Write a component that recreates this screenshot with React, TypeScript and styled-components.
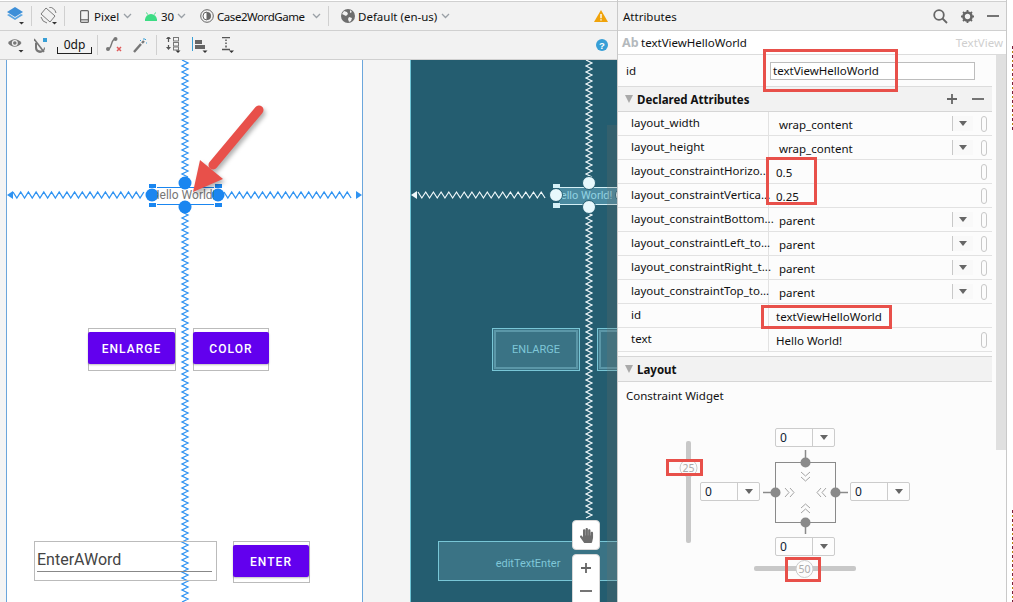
import styled, { createGlobalStyle } from "styled-components";
import { FaHandPaper } from "react-icons/fa";

const GlobalStyle = createGlobalStyle`
  html, body { margin: 0; padding: 0; background: #fff; overflow: hidden; }
  * { box-sizing: border-box; }
`;

const Page = styled.div`
  position: relative;
  display: flex;
  width: 1013px;
  height: 602px;
  overflow: hidden;
  font-family: "Noto Sans", "Open Sans", sans-serif;
  font-size: 11.5px;
  color: #111;
  background: #fff;
`;

const DesignPane = styled.div`
  display: flex;
  flex-direction: column;
  width: 618px;
  height: 100%;
  border-right: 1px solid #c9c9c9;
`;

const Toolbar = styled.div<{ $first?: boolean }>`
  display: flex;
  align-items: center;
  flex: none;
  height: ${(p) => (p.$first ? "30px" : "29px")};
  margin-top: ${(p) => (p.$first ? "1px" : "0")};
  border-top: ${(p) => (p.$first ? "1px solid #d0d0d0" : "none")};
  border-bottom: 1px solid #d0d0d0;
  background: #f2f2f2;
  padding-right: 9px;
`;

const Slot = styled.div<{ $w: number; $ml?: number }>`
  display: flex;
  align-items: center;
  justify-content: center;
  flex: none;
  width: ${(p) => p.$w}px;
  margin-left: ${(p) => p.$ml ?? 0}px;
  white-space: nowrap;
`;

const Label = styled(Slot)<{ $ls?: number }>`
  justify-content: flex-start;
  letter-spacing: ${(p) => p.$ls ?? 0}px;
`;

const Sep = styled.div<{ $ml: number }>`
  flex: none;
  width: 1px;
  height: 20px;
  margin-left: ${(p) => p.$ml}px;
  background: #d0d0d0;
`;

const Push = styled.div`
  flex: 1;
`;

const Dp = styled.div<{ $ml: number }>`
  flex: none;
  width: 35px;
  height: 17px;
  margin-left: ${(p) => p.$ml}px;
  border-bottom: 1px solid #222;
  border-left: 1px solid #222;
  border-right: 1px solid #222;
  border-image: linear-gradient(to bottom, transparent 60%, #222 60%) 1;
  text-align: center;
  font-size: 12px;
  line-height: 15px;
`;

const Canvas = styled.div`
  display: flex;
  flex: 1;
  min-height: 0;
  padding-left: 6px;
  gap: 47px;
  background: #f4f4f4;
`;

const Surface = styled.div`
  position: relative;
  flex: none;
  width: 357px;
  height: 100%;
  background: #fff;
  box-shadow: inset 1px 0 0 #6ba6dc, inset -1px 0 0 #6ba6dc;
`;

const Blueprint = styled.div`
  position: relative;
  flex: 1;
  height: 100%;
  overflow: hidden;
  background: #245d70;
  box-shadow: inset 1px 0 0 #6fc5d5;
`;

const Strip = styled.div`
  position: absolute;
  left: 197px;
  top: 65px;
  bottom: 0;
  width: 10px;
  background: rgba(120, 110, 100, 0.2);
`;

const Guides = styled.svg`
  position: absolute;
  left: 0;
  top: 0;
  width: 100%;
  height: 100%;
  pointer-events: none;
`;

const Placed = styled.div<{ $x: number; $y: number; $w: number; $h: number }>`
  position: absolute;
  left: ${(p) => p.$x}px;
  top: ${(p) => p.$y}px;
  width: ${(p) => p.$w}px;
  height: ${(p) => p.$h}px;
`;

const ButtonFrame = styled(Placed)`
  border: 1px solid #bbb;
  padding-top: 3px;
`;

const PurpleButton = styled.div<{ $w: number }>`
  display: flex;
  align-items: center;
  justify-content: center;
  width: ${(p) => p.$w}px;
  height: 32px;
  margin-left: -1px;
  padding-top: 1px;
  border-radius: 2px;
  background: #6200ee;
  box-shadow: 0 1px 2px rgba(0, 0, 0, 0.25);
  color: #fff;
  font-family: Roboto, sans-serif;
  font-weight: 500;
  font-size: 12px;
  letter-spacing: 1.05px;
`;

const WordField = styled(Placed)`
  border: 1px solid #bbb;
  padding: 6px 4px 0 2px;
  font-family: Roboto, sans-serif;
  font-size: 16px;
  line-height: 23px;
  color: #444;
`;

const WordLine = styled.div`
  height: 1px;
  background: #888;
`;

const HelloBox = styled(Placed)<{ $dark?: boolean }>`
  overflow: hidden;
  border-top: 1px solid ${(p) => (p.$dark ? "#d5f0f6" : "#1a86f0")};
  border-bottom: 1px solid ${(p) => (p.$dark ? "#d5f0f6" : "#1a86f0")};
  background: ${(p) => (p.$dark ? "#4a8aa0" : "transparent")};
  color: ${(p) => (p.$dark ? "#93d3e2" : "#777")};
  font-family: Roboto, sans-serif;
  font-size: ${(p) => (p.$dark ? "11px" : "12px")};
  line-height: 15px;
  white-space: nowrap;
  text-indent: -6px;
`;

const BlueWidget = styled(Placed)<{ $double?: boolean; $low?: boolean }>`
  display: flex;
  align-items: center;
  justify-content: center;
  padding-top: ${(p) => (p.$low ? "5px" : "0")};
  border: 1px solid #78c6d6;
  background: #3a7385;
  outline: ${(p) => (p.$double ? "2px solid #5b97a8" : "none")};
  outline-offset: -4px;
  color: #7fc7d8;
  font-family: Roboto, sans-serif;
  font-size: 11px;
  white-space: nowrap;
`;

const FloatButton = styled(Placed)`
  display: flex;
  align-items: center;
  justify-content: center;
  border-radius: 4px;
  border: 1px solid #d8d8d8;
  background: #fff;
  color: #6d6d6d;
`;

const ZoomButton = styled(FloatButton)`
  flex-direction: column;
  justify-content: flex-start;
  padding-top: 7px;
  gap: 11px;
`;

const AttributesPane = styled.div`
  display: flex;
  flex-direction: column;
  flex: none;
  width: 389px;
  height: 100%;
  border-right: 1px solid #c9c9c9;
  background: #fcfcfc;
`;

const AttrHeader = styled.div`
  display: flex;
  align-items: center;
  flex: none;
  height: 30px;
  margin-top: 1px;
  padding: 0 7px 0 5px;
  gap: 13px;
  border-top: 1px solid #d0d0d0;
  border-bottom: 1px solid #d0d0d0;
  background: #f2f2f2;
`;

const SubjectRow = styled.div`
  display: flex;
  align-items: center;
  flex: none;
  height: 24px;
  padding: 0 3px 0 4px;
  border-bottom: 1px solid #dcdcdc;
  background: #fff;
`;

const AbMark = styled.span`
  width: 19px;
  color: #b4b9bd;
  font-weight: 700;
  font-size: 12.5px;
`;

const WidgetType = styled.span`
  margin-left: auto;
  color: #cfcfcf;
`;

const AttrBody = styled.div`
  display: flex;
  flex: 1;
  min-height: 0;
`;

const AttrScroll = styled.div`
  flex: none;
  width: 378px;
`;

const ScrollTrack = styled.div`
  flex: none;
  width: 10px;
  height: 395px;
  background: #e0e0e0;
`;

const Table = styled.div`
  width: 374px;
`;

const IdRow = styled.div`
  display: flex;
  align-items: center;
  height: 32px;
  padding-left: 8px;
  border-bottom: 1px solid #dcdcdc;
`;

const IdName = styled.span`
  width: 144px;
`;

const IdInput = styled.div`
  width: 205px;
  height: 18px;
  padding-left: 2px;
  border: 1px solid #bdbdbd;
  background: #fff;
  line-height: 15px;
`;

const Section = styled.div`
  display: flex;
  align-items: center;
  height: 25px;
  padding-left: 7px;
  border-bottom: 1px solid #d6d6d6;
  background: #f2f2f2;
  font-weight: 700;
`;

const SectionTail = styled.div`
  display: flex;
  align-items: center;
  gap: 14px;
  margin-left: auto;
  margin-right: 8px;
`;

const Caret = styled.span`
  width: 0;
  height: 0;
  margin-right: 4px;
  border-left: 4.5px solid transparent;
  border-right: 4.5px solid transparent;
  border-top: 8px solid #a9a9a9;
`;

const Row = styled.div`
  display: flex;
  height: 24px;
  border-bottom: 1px solid #e2e2e2;
`;

const RowName = styled.div`
  flex: none;
  width: 151px;
  padding-left: 13px;
  border-right: 1px solid #e2e2e2;
  line-height: 21px;
  white-space: nowrap;
`;

const RowValue = styled.div<{ $pad: number }>`
  display: flex;
  align-items: center;
  flex: 1;
  padding-left: ${(p) => p.$pad}px;
`;

const DropControl = styled.div`
  display: flex;
  align-items: center;
  justify-content: center;
  flex: none;
  width: 21px;
  height: 15px;
  border-left: 1px solid #c8c8c8;
  background: #f9f9f9;
`;

const DownArrow = styled.span`
  width: 0;
  height: 0;
  border-left: 4.5px solid transparent;
  border-right: 4.5px solid transparent;
  border-top: 5px solid #666;
`;

const ValueText = styled.span`
  margin-right: auto;
  margin-top: 2px;
`;

const Pill = styled.span`
  flex: none;
  width: 6px;
  height: 16px;
  margin: 0 5px 0 8px;
  border: 1px solid #c8c8c8;
  border-radius: 3px;
`;

const GapLine = styled.div`
  height: 5px;
  border-bottom: 1px solid #d6d6d6;
`;

const WidgetTitle = styled.div`
  padding: 6px 0 0 8px;
  line-height: 16px;
`;

const Diagram = styled.div`
  position: relative;
  height: 180px;
  margin-top: 16px;
`;

const SmallDrop = styled(Placed)`
  display: flex;
  align-items: center;
  border: 1px solid #ccc;
  border-radius: 2px;
  background: #fdfdfd;
  padding-left: 4px;
  font-size: 12px;
`;

const SmallValue = styled.span`
  flex: 1;
  color: #123;
`;

const SmallArrow = styled.span`
  display: flex;
  align-items: center;
  justify-content: center;
  width: 22px;
  height: 100%;
  border-left: 1px solid #ccc;
`;

const EdgeColumn = styled.div`
  flex: 1;
  position: relative;
  background: #fff;
`;

const EdgeMarks = styled.div<{ $top: number; $h: number }>`
  position: absolute;
  right: 0;
  top: ${(p) => p.$top}px;
  width: 1px;
  height: ${(p) => p.$h}px;
  background: repeating-linear-gradient(to bottom, #7a1f3a 0 3px, transparent 3px 5px, #b8860b 5px 7px, transparent 7px 9px);
`;

const Annotation = styled(Placed)`
  border: 3px solid #e8504a;
`;

const ArrowMark = styled.svg`
  position: absolute;
  left: 170px;
  top: 90px;
  width: 110px;
  height: 120px;
  filter: drop-shadow(2px 3px 2px rgba(0, 0, 0, 0.3));
`;

const zigzag = (x: number, y: number, len: number, vertical: boolean, period: number, amp: number) => {
  const pts: string[] = [];
  const step = period / 2;
  for (let i = 0; i * step <= len; i++) {
    const along = i * step;
    const off = i % 2 === 0 ? -amp : amp;
    pts.push(vertical ? `${x + off},${y + along}` : `${x + along},${y + off}`);
  }
  return pts.join(" ");
};

const Chevron = () => (
  <svg width="9" height="6" viewBox="0 0 9 6">
    <path d="M1 1l3.5 3.5L8 1" fill="none" stroke="#9aa0a6" strokeWidth="1.3" />
  </svg>
);

const Mini = ({ x = 0, y = 0 }: { x?: number; y?: number }) => <path d={`M${x} ${y}h5l-2.5 2.5z`} fill="#333" />;

const LayersIcon = () => (
  <svg width="17" height="18" viewBox="0 0 17 18">
    <path d="M8 0l8 5-8 5-8-5z" fill="#3d8fd8" />
    <path d="M0 8l2-1 6 4 6-4 2 1-8 5z" fill="#5aa5e2" />
    <Mini x={12} y={15} />
  </svg>
);

const RotateIcon = () => (
  <svg width="17" height="18" viewBox="0 0 17 18" fill="none" stroke="#7a7a7a">
    <path d="M6 1l9 8-5 6-9-8z" fill="#f2f2f2" />
    <path d="M1 10a8 8 0 0 0 6 6M9 0a8 8 0 0 1 7 6" />
    <path d="M12 15h5l-2.500 2.500z" fill="#333" stroke="none" />
  </svg>
);

const PhoneIcon = () => (
  <svg width="9" height="13" viewBox="0 0 9 13" fill="none" stroke="#666" strokeWidth="1.2">
    <rect x=".6" y=".6" width="7.800" height="11.800" rx="1" />
    <path d="M.6 9.800h7.800" />
  </svg>
);

const AndroidIcon = () => (
  <svg width="12" height="9" viewBox="0 0 12 9">
    <path d="M0 8a6 6 0 0 1 12 0z" fill="#3ddc84" />
    <path d="M2.500 2.500L1.500 .5M9.500 2.500l1-2" stroke="#3ddc84" />
    <rect x="0" y="7" width="12" height="2" fill="#3ddc84" />
  </svg>
);

const ThemeIcon = () => (
  <svg width="14" height="14" viewBox="0 0 14 14">
    <circle cx="7" cy="7" r="6.300" fill="none" stroke="#666" />
    <path d="M7 3a4 4 0 0 0 0 8z" fill="#fff" stroke="#666" />
    <path d="M7 3a4 4 0 0 1 0 8z" fill="#666" />
  </svg>
);

const GlobeIcon = () => (
  <svg width="14" height="14" viewBox="0 0 14 14">
    <circle cx="7" cy="7" r="7" fill="#6e6e6e" />
    <path d="M3 2l3 1 1 2-2 2-2-1-2-1zM8 8l3 1-1 3-2 1-1-3zM9 1l2 2-2 1z" fill="#f2f2f2" />
  </svg>
);

const WarnIcon = () => (
  <svg width="14" height="12" viewBox="0 0 14 12">
    <path d="M7 0l7 12H0z" fill="#f0a30a" />
    <path d="M6.300 4h1.400v4.200H6.300zM6.300 9.200h1.400v1.400H6.300z" fill="#fff" />
  </svg>
);

const EyeIcon = () => (
  <svg width="16" height="17" viewBox="0 0 16 17">
    <path d="M0 6c3.500-5 10-5 13.500 0C10 11 3.500 11 0 6z" fill="#777" />
    <circle cx="6.800" cy="6" r="3" fill="#f2f2f2" />
    <circle cx="6.800" cy="6" r="1.800" fill="#777" />
    <path d="M10.500 13h5L13 15.500z" fill="#333" />
  </svg>
);

const MagnetIcon = () => (
  <svg width="14" height="15" viewBox="0 0 14 15">
    <path d="M1 2l2-1 0 5a3.500 3.500 0 0 0 7 0l1 1a5 5 0 0 1-10 0z" fill="#777" transform="translate(0 3)" />
    <path d="M0 1l10 13" stroke="#777" strokeWidth="1.600" />
    <rect x="9" y="0" width="4" height="4" fill="#389fd6" />
  </svg>
);

const CurveIcon = () => (
  <svg width="17" height="16" viewBox="0 0 17 16" fill="none">
    <path d="M2 12c4 0 3-10 7-10" stroke="#777" strokeWidth="1.400" />
    <circle cx="2" cy="12" r="2" fill="#777" />
    <circle cx="9.500" cy="2" r="2" fill="#777" />
    <path d="M11 10l4 4M15 10l-4 4" stroke="#e05a5a" strokeWidth="1.500" />
  </svg>
);

const WandIcon = () => (
  <svg width="14" height="15" viewBox="0 0 14 15" fill="none">
    <path d="M1 14l7-8" stroke="#777" strokeWidth="2.400" />
    <path d="M9 5l2-2" stroke="#777" strokeWidth="2.400" />
    <path d="M11 0v2M13 5h1M7 2l1 1M13 1l-1 1" stroke="#389fd6" />
  </svg>
);

const PackIcon = () => (
  <svg width="16" height="16" viewBox="0 0 16 16" fill="none">
    <path d="M3.500 0l2.500 3H1zM3.500 14l2.500-3H1z" fill="#555" transform="translate(0 -1)" />
    <path d="M3.500 2v3M3.500 8v3" stroke="#555" strokeWidth="1.200" />
    <rect x="8.500" y=".5" width="5" height="3.500" stroke="#777" />
    <rect x="8.500" y="5.500" width="5" height="3.500" stroke="#777" />
    <rect x="8.500" y="10" width="5" height="3" stroke="#777" />
    <path d="M10.500 13.500h5L13 16z" fill="#333" />
  </svg>
);

const AlignIcon = () => (
  <svg width="16" height="16" viewBox="0 0 16 16">
    <rect x="0" y="0" width="1" height="14" fill="#389fd6" />
    <rect x="3" y="3" width="7" height="4" fill="#666" />
    <rect x="3" y="8" width="10" height="4" fill="#666" />
    <path d="M10.500 13.500h5L13 16z" fill="#333" />
  </svg>
);

const MarginIcon = () => (
  <svg width="14" height="16" viewBox="0 0 14 16" fill="none">
    <path d="M2 .5h8M2 12.500h8" stroke="#555" strokeWidth="1.300" />
    <path d="M6 2.500v1.500M6 5.500v1.500M6 8.500v2" stroke="#555" strokeWidth="1.500" />
    <path d="M9 13.500h5L11.500 16z" fill="#333" />
  </svg>
);

const HelpIcon = () => (
  <svg width="12" height="12" viewBox="0 0 12 12">
    <circle cx="6" cy="6" r="6" fill="#389fd6" />
    <text x="6" y="9.500" textAnchor="middle" fontSize="9.500" fontWeight="700" fontFamily="Liberation Sans, sans-serif" fill="#fff">?</text>
  </svg>
);

const SearchIcon = () => (
  <svg width="15" height="15" viewBox="0 0 15 15" fill="none" stroke="#666" strokeWidth="1.800">
    <circle cx="6" cy="6" r="4.800" />
    <path d="M9.500 9.500l4.500 4.500" />
  </svg>
);

const GearIcon = () => (
  <svg width="13" height="13" viewBox="0 0 13 13">
    <circle cx="6.500" cy="6.500" r="4" fill="none" stroke="#666" strokeWidth="2.600" />
    <path d="M6.500 0v13M0 6.500h13M2 2l9 9M11 2l-9 9" stroke="#666" strokeWidth="1.800" strokeDasharray="2 9" />
  </svg>
);

const Dash = () => (
  <svg width="12" height="12" viewBox="0 0 12 12">
    <path d="M0 6h12" stroke="#666" strokeWidth="1.800" />
  </svg>
);

const Plus = () => (
  <svg width="12" height="12" viewBox="0 0 12 12">
    <path d="M1 6h10M6 1v10" stroke="#666" strokeWidth="1.800" />
  </svg>
);

type Attr = { name: string; value: string; pad: number; drop?: boolean; pill?: boolean };

const attrs: Attr[] = [
  { name: "layout_width", value: "wrap_content", pad: 10, drop: true, pill: true },
  { name: "layout_height", value: "wrap_content", pad: 10, drop: true, pill: true },
  { name: "layout_constraintHorizo...", value: "0.5", pad: 7, pill: true },
  { name: "layout_constraintVertica...", value: "0.25", pad: 7, pill: true },
  { name: "layout_constraintBottom...", value: "parent", pad: 10, drop: true, pill: true },
  { name: "layout_constraintLeft_to...", value: "parent", pad: 10, drop: true, pill: true },
  { name: "layout_constraintRight_t...", value: "parent", pad: 10, drop: true, pill: true },
  { name: "layout_constraintTop_to...", value: "parent", pad: 10, drop: true, pill: true },
  { name: "id", value: "textViewHelloWorld", pad: 7 },
  { name: "text", value: "Hello World!", pad: 7, pill: true },
];

const handles = [
  [143, 124], [143, 143], [209, 124], [209, 143],
];

const ConstraintWidget = () => (
  <Diagram>
    <Guides>
      <rect x="68" y="21" width="5" height="102" rx="2" fill="#c8c8c8" />
      <circle cx="70.500" cy="48" r="8.500" fill="#fcfcfc" stroke="#ccc" />
      <text x="70.500" y="52" textAnchor="middle" fontSize="10.500" fontFamily="Noto Sans, sans-serif" fill="#aaa">25</text>
      <rect x="136" y="146" width="102" height="5" rx="2" fill="#c8c8c8" />
      <circle cx="186.500" cy="149" r="8.500" fill="#fcfcfc" stroke="#ccc" />
      <text x="186.500" y="153" textAnchor="middle" fontSize="10.500" fontFamily="Noto Sans, sans-serif" fill="#aaa">50</text>
      <rect x="157.500" y="42.500" width="60" height="60" fill="none" stroke="#8a8a8a" />
      <g stroke="#8a8a8a" strokeWidth="1.500">
        <path d="M187.500 30v12M187.500 103v11M145 72.500h12M218 72.500h12" />
      </g>
      <g fill="#8a8a8a">
        <circle cx="187.500" cy="42.500" r="5" />
        <circle cx="187.500" cy="102.500" r="5" />
        <circle cx="157.500" cy="72.500" r="5" />
        <circle cx="217.500" cy="72.500" r="5" />
      </g>
      <g fill="none" stroke="#a5a5a5">
        <path d="M183 52l4.500 4 4.500-4M183 57l4.500 4 4.500-4" />
        <path d="M183 88l4.500-4 4.500 4M183 93l4.500-4 4.500 4" />
        <path d="M167 68l4 4.500-4 4.500M172 68l4 4.500-4 4.500" />
        <path d="M208 68l-4 4.500 4 4.500M203 68l-4 4.500 4 4.500" />
      </g>
    </Guides>
    <SmallDrop $x={157} $y={8} $w={60} $h={19}>
      <SmallValue>0</SmallValue>
      <SmallArrow><DownArrow /></SmallArrow>
    </SmallDrop>
    <SmallDrop $x={82} $y={62} $w={60} $h={19}>
      <SmallValue>0</SmallValue>
      <SmallArrow><DownArrow /></SmallArrow>
    </SmallDrop>
    <SmallDrop $x={232} $y={62} $w={60} $h={19}>
      <SmallValue>0</SmallValue>
      <SmallArrow><DownArrow /></SmallArrow>
    </SmallDrop>
    <SmallDrop $x={157} $y={117} $w={60} $h={19}>
      <SmallValue>0</SmallValue>
      <SmallArrow><DownArrow /></SmallArrow>
    </SmallDrop>
  </Diagram>
);

export default function App() {
  return (
    <Page>
      <GlobalStyle />
      <DesignPane>
        <Toolbar $first>
          <Slot $w={17} $ml={7}><LayersIcon /></Slot>
          <Sep $ml={7} />
          <Slot $w={17} $ml={8}><RotateIcon /></Slot>
          <Sep $ml={7} />
          <Slot $w={9} $ml={15}><PhoneIcon /></Slot>
          <Label $w={29} $ml={5}>Pixel</Label>
          <Slot $w={9}><Chevron /></Slot>
          <Slot $w={12} $ml={13}><AndroidIcon /></Slot>
          <Label $w={16} $ml={4}>30</Label>
          <Slot $w={9}><Chevron /></Slot>
          <Slot $w={14} $ml={14}><ThemeIcon /></Slot>
          <Label $w={95} $ml={3} $ls={-0.45}>Case2WordGame</Label>
          <Slot $w={9}><Chevron /></Slot>
          <Sep $ml={7} />
          <Slot $w={14} $ml={12}><GlobeIcon /></Slot>
          <Label $w={83} $ml={3}>Default (en-us)</Label>
          <Slot $w={9}><Chevron /></Slot>
          <Push />
          <WarnIcon />
        </Toolbar>
        <Toolbar>
          <Slot $w={16} $ml={8}><EyeIcon /></Slot>
          <Slot $w={14} $ml={10}><MagnetIcon /></Slot>
          <Dp $ml={9}>0dp</Dp>
          <Sep $ml={5} />
          <Slot $w={17} $ml={8}><CurveIcon /></Slot>
          <Slot $w={14} $ml={10}><WandIcon /></Slot>
          <Sep $ml={9} />
          <Slot $w={16} $ml={8}><PackIcon /></Slot>
          <Slot $w={16} $ml={11}><AlignIcon /></Slot>
          <Slot $w={14} $ml={12}><MarginIcon /></Slot>
          <Push />
          <HelpIcon />
        </Toolbar>
        <Canvas>
          <Surface>
            <Guides>
              <polyline points={zigzag(179, 0, 118, true, 6, 3)} fill="none" stroke="#2f93f2" strokeWidth="1.300" />
              <polyline points={zigzag(179, 152, 392, true, 6, 3)} fill="none" stroke="#2f93f2" strokeWidth="1.300" />
              <polyline points={zigzag(7, 135, 132, false, 7.700, 3)} fill="none" stroke="#2f93f2" strokeWidth="1.300" />
              <polyline points={zigzag(218, 135, 130, false, 7.700, 3)} fill="none" stroke="#2f93f2" strokeWidth="1.300" />
              <path d="M1 135l6-4v8zM356 135l-6-4v8z" fill="#2f93f2" />
              {handles.map(([x, y]) => (
                <rect key={`${x}-${y}`} x={x} y={y} width="7" height="4" fill="#1a86f0" />
              ))}
              <circle cx="146" cy="135" r="6.500" fill="#1a86f0" />
              <circle cx="212" cy="135" r="6.500" fill="#1a86f0" />
              <circle cx="179" cy="123" r="6.500" fill="#1a86f0" />
              <circle cx="179" cy="147" r="6.500" fill="#1a86f0" />
            </Guides>
            <HelloBox $x={151} $y={127} $w={57} $h={18}>Hello World!</HelloBox>
            <ButtonFrame $x={82} $y={268} $w={88} $h={43}>
              <PurpleButton $w={87}>ENLARGE</PurpleButton>
            </ButtonFrame>
            <ButtonFrame $x={187} $y={268} $w={76} $h={43}>
              <PurpleButton $w={76}>COLOR</PurpleButton>
            </ButtonFrame>
            <WordField $x={28} $y={481} $w={183} $h={40}>
              EnterAWord
              <WordLine />
            </WordField>
            <ButtonFrame $x={227} $y={481} $w={77} $h={42}>
              <PurpleButton $w={76}>ENTER</PurpleButton>
            </ButtonFrame>
          </Surface>
          <Blueprint>
            <Guides>
              <polyline points={zigzag(179, 0, 117, true, 6, 3)} fill="none" stroke="#f0f8fa" strokeWidth="1.200" />
              <polyline points={zigzag(179, 152, 308, true, 6, 3)} fill="none" stroke="#f0f8fa" strokeWidth="1.200" />
              <polyline points={zigzag(8, 135, 130, false, 7.700, 3)} fill="none" stroke="#f0f8fa" strokeWidth="1.200" />
              <path d="M1 135l6-4v8z" fill="#f0f8fa" />
            </Guides>
            <HelloBox $dark $x={149} $y={127} $w={58} $h={18}>Hello World!</HelloBox>
            <Guides>
              <rect x="143" y="124" width="7" height="4" fill="#d5f0f6" />
              <rect x="143" y="143" width="7" height="5" fill="#d5f0f6" />
              <circle cx="146" cy="135" r="6.500" fill="#e8f8fc" stroke="#245d70" />
              <circle cx="179" cy="123" r="6.500" fill="#e8f8fc" stroke="#245d70" />
              <circle cx="179" cy="147" r="6.500" fill="#e8f8fc" stroke="#245d70" />
              <circle cx="212" cy="135" r="6.500" fill="#e8f8fc" stroke="#245d70" />
            </Guides>
            <BlueWidget $double $x={82} $y={268} $w={88} $h={43}>ENLARGE</BlueWidget>
            <BlueWidget $double $x={187} $y={268} $w={76} $h={43} />
            <BlueWidget $low $x={28} $y={481} $w={180} $h={40}>editTextEnter</BlueWidget>
            <Strip />
            <FloatButton $x={162} $y={460} $w={28} $h={30}>
              <FaHandPaper size={15} />
            </FloatButton>
            <ZoomButton $x={162} $y={494} $w={28} $h={60}>
              <Plus />
              <Dash />
            </ZoomButton>
          </Blueprint>
        </Canvas>
      </DesignPane>
      <AttributesPane>
        <AttrHeader>
          Attributes
          <Push />
          <SearchIcon />
          <GearIcon />
          <Dash />
        </AttrHeader>
        <SubjectRow>
          <AbMark>Ab</AbMark>
          textViewHelloWorld
          <WidgetType>TextView</WidgetType>
        </SubjectRow>
        <AttrBody>
          <AttrScroll>
            <Table>
              <IdRow>
                <IdName>id</IdName>
                <IdInput>textViewHelloWorld</IdInput>
              </IdRow>
              <Section>
                <Caret />
                Declared Attributes
                <SectionTail>
                  <Plus />
                  <Dash />
                </SectionTail>
              </Section>
              {attrs.map((a) => (
                <Row key={a.name}>
                  <RowName>{a.name}</RowName>
                  <RowValue $pad={a.pad}>
                    <ValueText>{a.value}</ValueText>
                    {a.drop && <DropControl><DownArrow /></DropControl>}
                    {a.pill && <Pill />}
                  </RowValue>
                </Row>
              ))}
              <GapLine />
              <Section>
                <Caret />
                Layout
              </Section>
              <WidgetTitle>Constraint Widget</WidgetTitle>
              <ConstraintWidget />
            </Table>
          </AttrScroll>
          <ScrollTrack />
        </AttrBody>
      </AttributesPane>
      <EdgeColumn>
        <EdgeMarks $top={46} $h={84} />
        <EdgeMarks $top={510} $h={92} />
      </EdgeColumn>
      <ArrowMark viewBox="170 90 110 120">
        <path d="M259 110L213 165" stroke="#e8504a" strokeWidth="9" strokeLinecap="round" />
        <path d="M193 192l7-32 23 19z" fill="#e8504a" />
      </ArrowMark>
      <Annotation $x={763} $y={49} $w={135} $h={43} />
      <Annotation $x={766} $y={157} $w={51} $h={48} />
      <Annotation $x={761} $y={305} $w={131} $h={24} />
      <Annotation $x={666} $y={459} $w={37} $h={17} />
      <Annotation $x={785} $y={557} $w={36} $h={25} />
    </Page>
  );
}
